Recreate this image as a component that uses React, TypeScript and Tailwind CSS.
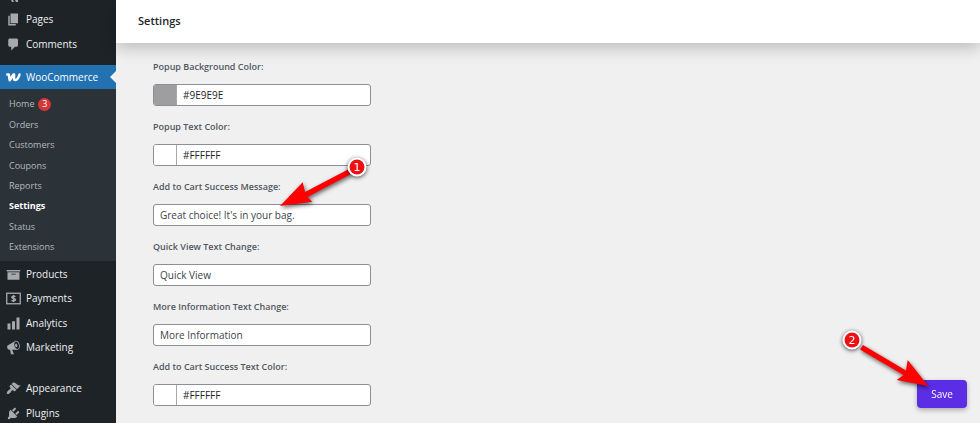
import { useState } from 'react';
import type { ReactNode } from 'react';
import clsx from 'clsx';

interface IconProps {
  children: ReactNode;
}

function MenuIcon({ children }: IconProps) {
  return (
    <svg viewBox="0 0 20 20" className="size-[15px]" fill="currentColor" aria-hidden="true">
      {children}
    </svg>
  );
}

const icons = {
  pages: <MenuIcon><path d="M6 15V2h10v13H6zm-1 1h8v2H3V5h2v11z" /></MenuIcon>,
  comments: (
    <MenuIcon>
      <path d="M5 2h9c1.1 0 2 .9 2 2v7c0 1.1-.9 2-2 2h-2l-5 5v-5H5c-1.1 0-2-.9-2-2V4c0-1.1.9-2 2-2z" />
    </MenuIcon>
  ),
  woo: (
    <svg viewBox="0 0 15 9" className="h-[9px] w-[15px]" fill="none" stroke="currentColor" aria-hidden="true">
      <path d="M1.3 1.5h1.500L3.700 7.200 7.500 1.500h.6l-.1 4.300q.1 1.500 1.600 1.200C11.600 6.500 12.800 4 13.500 1.500" strokeWidth="2.500" strokeLinejoin="round" strokeLinecap="round" />
    </svg>
  ),
  products: <MenuIcon><path d="M19 4v2H1V4h18zM2 7h16v10H2V7zm11 3V9H7v1h6z" /></MenuIcon>,
  payments: (
    <svg viewBox="0 0 15 13" className="h-[13px] w-[15px]" fill="none" stroke="currentColor" aria-hidden="true">
      <rect x=".75" y="1.250" width="13.500" height="10.500" strokeWidth="1.300" />
      <path d="M9.400 4.700C8.800 3.900 5.800 3.800 5.800 5.300c0 1.600 3.700.8 3.700 2.500 0 1.500-3.100 1.500-3.900.5M7.600 3v7" strokeWidth="1.400" />
    </svg>
  ),
  analytics: <MenuIcon><path d="M18 18V2h-4v16h4zm-6 0V7H8v11h4zm-6 0v-8H2v8h4z" /></MenuIcon>,
  marketing: (
    <MenuIcon>
      <path d="M18.150 5.940c.46 1.620.38 3.220-.02 4.480-.42 1.280-1.260 2.180-2.300 2.480-.16.060-.26.060-.4.060-.06.020-.12.020-.18.020-.06.020-.14.020-.22.020h-6.800l2.220 5.500c.02.140-.06.260-.14.340-.08.100-.24.160-.34.160H6.950c-.1 0-.26-.06-.34-.16-.08-.08-.16-.2-.14-.34l-1-5.500H4.250l-.02-.02c-.5.060-1.080-.18-1.540-.62s-.88-1.080-1.060-1.880c-.24-.8-.2-1.560-.02-2.200.18-.62.58-1.080 1.060-1.300l.02-.02 9-5.400c.1-.06.18-.1.24-.16.06-.04.14-.08.24-.12.16-.08.28-.12.5-.18 1.040-.3 2.240.1 3.220.98s1.840 2.240 2.260 3.860zm-2.580 5.980h-.02c.4-.1.74-.34 1.040-.7.58-.7.86-1.760.86-3.040 0-.64-.1-1.300-.28-1.980-.34-1.360-1.020-2.500-1.780-3.240s-1.680-1.100-2.460-.88c-.82.220-1.400.96-1.700 2-.32 1.040-.28 2.360.06 3.720.38 1.360 1 2.500 1.800 3.240.78.740 1.620 1.100 2.480.88zm-2.540-7.080c.22-.04.42-.02.62.040.38.160.76.480 1.020 1s.42 1.200.42 1.780c0 .3-.04.56-.12.800-.18.480-.44.840-.86.940-.34.100-.8-.06-1.140-.4s-.64-.86-.78-1.500c-.18-.62-.12-1.240.02-1.720s.48-.84.820-.94z" />
    </MenuIcon>
  ),
  appearance: (
    <MenuIcon>
      <path d="M14.480 11.060L7.410 3.990l1.500-1.500c.5-.56 2.300-.47 3.510.320 1.210.8 1.430 1.280 2.910 2.100 1.180.640 2.450 1.260 4.450.850zm-.71.710L6.700 4.700 4.930 6.470c-.39.390-.39 1.020 0 1.410l1.060 1.060c.39.390.39 1.030 0 1.420-.6.600-1.430 1.110-2.210 1.690-.35.260-.7.530-1.010.840C1.430 14.230.4 16.080 1.400 17.070c.99 1 2.840-.03 4.180-1.360.31-.31.58-.66.850-1.020.57-.78 1.080-1.610 1.690-2.210.39-.39 1.020-.39 1.410 0l1.060 1.060c.39.390 1.020.390 1.410 0z" />
    </MenuIcon>
  ),
  plugins: (
    <MenuIcon>
      <path d="M13.110 4.360L9.870 7.600 8 5.730l3.240-3.240c.35-.34 1.050-.2 1.560.320.52.510.66 1.210.310 1.550zm-8 1.770l.910-1.120 9.010 9.010-1.190.840c-.71.710-2.630 1.160-3.820 1.160H6.140L4.900 17.260c-.59.590-1.540.590-2.120 0-.59-.58-.59-1.530 0-2.120l1.240-1.240v-3.880c0-1.130.4-3.190 1.090-3.890zm7.260 3.970l3.240-3.240c.34-.35 1.040-.21 1.550.310.52.510.66 1.210.310 1.550l-3.240 3.250z" />
    </MenuIcon>
  ),
};

interface MenuItemProps {
  icon: ReactNode;
  label: string;
  active?: boolean;
}

function MenuItem({ icon, label, active = false }: MenuItemProps) {
  return (
    <a
      href="#"
      className={clsx(
        'flex items-center justify-between text-[10px]',
        active ? 'bg-[#2271b1] text-white' : 'text-[#f0f0f1]'
      )}
    >
      <span className="flex items-center gap-[5px] pl-[6px]">
        <span className={clsx('flex w-[15px] justify-center', active ? 'text-white' : 'text-[#a7aaad]')}>{icon}</span>
        {label}
      </span>
      {active && <span className="border-y-[6px] border-r-[6px] border-y-transparent border-r-[#f0f0f1]" />}
    </a>
  );
}

const submenu = ['Home', 'Orders', 'Customers', 'Coupons', 'Reports', 'Settings', 'Status', 'Extensions'];

function Sidebar() {
  return (
    <nav className="w-[116px] shrink-0 bg-[#1d2327]">
      {/* tail of the Media item, scrolled off the top */}
      <svg viewBox="0 0 9 3" className="ml-[10px] h-[3px] w-[9px]" fill="#a7aaad" aria-hidden="true">
        <path d="M1 0h2l1 2H2zM5 0h3v2H6z" />
      </svg>
      <div className="grid auto-rows-[25px] pt-[4px] pb-[8px]">
        <MenuItem icon={icons.pages} label="Pages" />
        <MenuItem icon={icons.comments} label="Comments" />
      </div>
      <div className="grid auto-rows-[24px]">
        <MenuItem icon={icons.woo} label="WooCommerce" active />
      </div>
      <ul className="grid h-[172px] auto-rows-fr bg-[#2c3338] pt-[5px] pb-[4px]">
        {submenu.map((label) => (
          <li key={label} className="flex items-center gap-1 pl-[9px] text-[9px]">
            <a href="#" className={label === 'Settings' ? 'font-bold text-white' : 'text-[#b4b9be]'}>
              {label}
            </a>
            {label === 'Home' && (
              <span className="flex size-[13px] items-center justify-center rounded-full bg-[#d63638] text-[9px] text-white">
                3
              </span>
            )}
          </li>
        ))}
      </ul>
      <div className="grid h-[99px] auto-rows-fr pt-px">
        <MenuItem icon={icons.products} label="Products" />
        <MenuItem icon={icons.payments} label="Payments" />
        <MenuItem icon={icons.analytics} label="Analytics" />
        <MenuItem icon={icons.marketing} label="Marketing" />
      </div>
      <div className="grid auto-rows-[25px] pt-4">
        <MenuItem icon={icons.appearance} label="Appearance" />
        <MenuItem icon={icons.plugins} label="Plugins" />
      </div>
    </nav>
  );
}

interface FieldProps {
  id: string;
  label: string;
  initial: string;
  color?: boolean;
  children?: ReactNode;
}

function Field({ id, label, initial, color = false, children }: FieldProps) {
  const [value, setValue] = useState(initial);

  return (
    <div className="relative flex w-[218px] flex-col gap-[10px]">
      <label htmlFor={id} className="text-[9px] leading-[14px] font-semibold text-[#50575e]">
        {label}
      </label>
      <div className="flex h-[22px] overflow-hidden rounded-[3px] border border-[#8c8f94] bg-white">
        {color && (
          <input
            type="color"
            aria-label={`${label} swatch`}
            value={value.toLowerCase()}
            onChange={(e) => setValue(e.target.value.toUpperCase())}
            className="h-full w-[23px] shrink-0 appearance-none border-r border-[#a7aaad] [&::-webkit-color-swatch]:border-none [&::-webkit-color-swatch-wrapper]:p-0"
          />
        )}
        <input
          id={id}
          type="text"
          value={value}
          onChange={(e) => setValue(e.target.value)}
          className={clsx(
            'min-w-0 flex-1 px-[6px] text-[10px] outline-none',
            color ? 'text-[#1d2327]' : 'text-[#3c434a]'
          )}
        />
      </div>
      {children}
    </div>
  );
}

interface StepArrowProps {
  step: number;
  arrow: string;
  cx: number;
  cy: number;
  className: string;
}

// Numbered marker with an arrow leading to the control
function StepArrow({ step, arrow, cx, cy, className }: StepArrowProps) {
  return (
    <svg viewBox="0 0 110 70" className={clsx('pointer-events-none absolute z-10 h-[70px] w-[110px] max-w-none overflow-visible', className)}>
      <g className="drop-shadow-[1px_2px_2px_rgba(0,0,0,0.6)]">
        <path d={arrow} fill="#fe0000" />
      </g>
      <circle cx={cx} cy={cy} r="9.500" fill="#fff" className="drop-shadow-[0_1px_2px_rgba(0,0,0,0.7)]" />
      <circle cx={cx} cy={cy} r="7.500" fill="#ee0f12" />
      <text x={cx} y={cy + 4} textAnchor="middle" fill="#fff" className="font-['DejaVu_Sans'] text-[11px]">
        {step}
      </text>
    </svg>
  );
}

export default function App() {
  return (
    <div className="flex h-screen overflow-hidden bg-[#f0f0f1] font-['Open_Sans','Noto_Sans',sans-serif]">
      <Sidebar />
      <div className="flex min-w-0 flex-1 flex-col">
        <header className="flex h-[43px] shrink-0 items-center bg-white px-[22px] shadow-[0_5px_16px_rgba(0,0,0,0.22)]">
          <h1 className="text-[11px] font-semibold text-[#1d2327]">Settings</h1>
        </header>
        <main className="flex-1">
          <form className="flex flex-col gap-[14px] px-[37px] pt-[17px]" onSubmit={(e) => e.preventDefault()}>
            <Field id="popup-bg" label="Popup Background Color:" initial="#9E9E9E" color />
            <Field id="popup-text" label="Popup Text Color:" initial="#FFFFFF" color />
            <Field id="success-message" label="Add to Cart Success Message:" initial="Great choice! It's in your bag.">
              <StepArrow
                step={1}
                cx={87}
                cy={17}
                arrow="M10 56 32.700 32.300 35 42 79 19 81 24 37.500 47 42.300 51.700z"
                className="-top-[30px] left-[117px]"
              />
            </Field>
            <Field id="quick-view" label="Quick View Text Change:" initial="Quick View" />
            <Field id="more-info" label="More Information Text Change:" initial="More Information" />
            <Field id="success-color" label="Add to Cart Success Text Color:" initial="#FFFFFF" color />
            <div className="fixed right-[13px] bottom-[15px]">
              <button
                type="submit"
                className="h-7 w-[50px] rounded-[4px] bg-[#5b2ee5] text-[10px] font-medium text-white shadow-[0_2px_5px_rgba(0,0,0,0.3)]"
              >
                Save
              </button>
              <StepArrow
                step={2}
                cx={12}
                cy={20}
                arrow="M88.300 66 67.700 40 66 50.500 23 25 20 29.500 63.500 55 56.700 60z"
                className="-top-[60px] -left-[77px]"
              />
            </div>
          </form>
        </main>
      </div>
    </div>
  );
}
